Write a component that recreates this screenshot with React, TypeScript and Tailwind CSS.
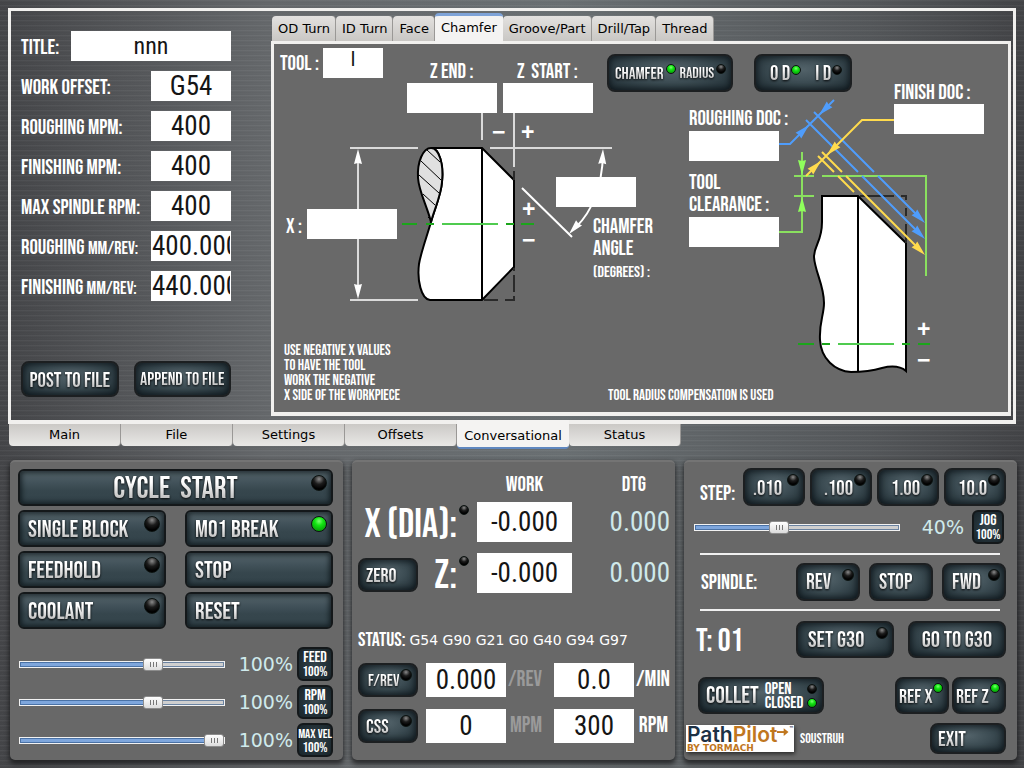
import type { CSSProperties, ReactNode } from 'react';

const BEBAS = "font-['Bebas_Neue','Roboto_Condensed','Liberation_Sans',sans-serif]";
const COND = "font-['Roboto_Condensed','Liberation_Sans',sans-serif]";
const DEJAVU = "font-['DejaVu_Sans',sans-serif]";

const METAL =
  'bg-[repeating-linear-gradient(to_bottom,rgba(255,255,255,0.04)_0px,rgba(255,255,255,0.04)_1px,rgba(0,0,0,0.06)_2px,rgba(0,0,0,0)_3px,rgba(0,0,0,0.03)_5px),linear-gradient(to_right,#454649_0%,#66696c_26%,#6b7174_55%,#55585b_85%,#434447_100%)]';

const FACE_WIDE =
  'rounded-md border-2 border-[#14181a] bg-[linear-gradient(to_bottom,#56656b_0%,#42525a_35%,#36464d_60%,#33434a_100%)] shadow-[inset_0_0_5px_2px_rgba(5,12,15,0.65)]';
const FACE =
  'rounded-lg border-2 border-[#1c1f21] bg-[radial-gradient(ellipse_at_50%_40%,#526269_0%,#3c4c53_45%,#1d2a30_100%)] shadow-[inset_0_0_6px_1px_rgba(5,12,15,0.7)]';

function Led({ on = false, size = 'size-3' }: { on?: boolean; size?: string }) {
  const tone = on
    ? 'bg-[radial-gradient(circle_at_50%_30%,#7dff70_0%,#12e512_35%,#0aa80a_75%)]'
    : 'bg-[radial-gradient(circle_at_50%_22%,#8a8a8a_0%,#1c1c1c_40%,#000_75%)]';
  return <span className={`${size} shrink-0 rounded-full border border-[#0b1210] ${tone}`} />;
}

function Etched({ children, size }: { children: ReactNode; size: string }) {
  return (
    <span
      className={`${BEBAS} ${size} whitespace-nowrap bg-linear-to-b from-white from-30% to-[#a9a9a9] bg-clip-text leading-none text-transparent drop-shadow-[0_1px_1px_rgba(0,0,0,0.9)]`}
    >
      {children}
    </span>
  );
}

type KeyProps = {
  children: ReactNode;
  size?: string;
  box: string;
  led?: 'on' | 'off';
  ledSize?: string;
  face?: string;
};

function Key({ children, size = 'text-[22px]', box, led, ledSize = 'size-3', face = FACE }: KeyProps) {
  return (
    <button type="button" className={`relative flex items-center pt-0.5 ${face} ${box}`}>
      <Etched size={size}>{children}</Etched>
      {led && (
        <span className="absolute right-1 top-1 flex">
          <Led on={led === 'on'} size={ledSize} />
        </span>
      )}
    </button>
  );
}

function Small({ top, bottom, box, text = 'text-[16px]' }: { top: string; bottom: string; box: string; text?: string }) {
  return (
    <button
      type="button"
      className={`${BEBAS} ${box} flex shrink-0 flex-col items-center justify-center rounded-md border-2 border-[#14181a] bg-[radial-gradient(circle,#33434a,#18242a)] text-white`}
    >
      <span className={`${text} whitespace-nowrap leading-[14px]`}>{top}</span>
      <span className="text-[14px] leading-[13px]">{bottom}</span>
    </button>
  );
}

function Slider({ value, max, label }: { value: number; max: number; label: string }) {
  const fill = { '--fill': `${(value / max) * 100}%` } as CSSProperties;
  return (
    <input
      type="range"
      aria-label={label}
      min={0}
      max={max}
      defaultValue={value}
      style={fill}
      className="h-3.5 w-[206px] shrink-0 appearance-none bg-transparent [&::-webkit-slider-runnable-track]:h-[7px] [&::-webkit-slider-runnable-track]:border [&::-webkit-slider-runnable-track]:border-[#f2f2f2] [&::-webkit-slider-runnable-track]:bg-[linear-gradient(to_right,#7ea6dc_var(--fill),#cfcfcf_var(--fill))] [&::-webkit-slider-runnable-track]:shadow-[inset_0_0_0_1px_rgba(40,80,130,0.6)] [&::-webkit-slider-thumb]:-mt-1 [&::-webkit-slider-thumb]:h-[13px] [&::-webkit-slider-thumb]:w-5 [&::-webkit-slider-thumb]:appearance-none [&::-webkit-slider-thumb]:rounded-[3px] [&::-webkit-slider-thumb]:border [&::-webkit-slider-thumb]:border-[#8c8c8c] [&::-webkit-slider-thumb]:bg-[linear-gradient(#777,#777),linear-gradient(#777,#777),linear-gradient(#777,#777),linear-gradient(to_bottom,#fff,#dcdcdc)] [&::-webkit-slider-thumb]:bg-[length:1px_5px,1px_5px,1px_5px,100%_100%] [&::-webkit-slider-thumb]:bg-[position:6px_3px,9px_3px,12px_3px,0_0] [&::-webkit-slider-thumb]:bg-no-repeat"
    />
  );
}

function Field({ id, value = '', box, text = 'text-[27px]' }: { id: string; value?: string; box: string; text?: string }) {
  return (
    <input
      id={id}
      type="text"
      defaultValue={value}
      className={`${COND} ${box} ${text} bg-white px-px text-center leading-none text-[#151515] outline-none`}
    />
  );
}

const setup = [
  { id: 'offset', label: 'Work Offset:', unit: '', value: 'G54' },
  { id: 'rough-mpm', label: 'Roughing MPM:', unit: '', value: '400' },
  { id: 'finish-mpm', label: 'Finishing MPM:', unit: '', value: '400' },
  { id: 'max-rpm', label: 'Max Spindle RPM:', unit: '', value: '400' },
  { id: 'rough-rev', label: 'Roughing ', unit: 'mm/rev:', value: '400.000' },
  { id: 'finish-rev', label: 'Finishing ', unit: 'mm/rev:', value: '440.000' },
];

function SetupForm() {
  return (
    <form className="w-[260px] shrink-0 pl-2.5 pr-10 pt-5">
      <div className="flex h-[30px] items-center">
        <label htmlFor="title" className={`${BEBAS} w-[50px] pt-0.5 text-[21px] uppercase leading-none text-white`}>
          Title:
        </label>
        <Field id="title" value="nnn" text="text-[24px]" box="h-[30px] w-[160px]" />
      </div>
      {setup.map((row) => (
        <div key={row.id} className="mt-2.5 flex h-[30px] items-center">
          <label htmlFor={row.id} className={`${BEBAS} w-[130px] whitespace-nowrap pt-0.5 text-[21px] uppercase leading-none text-white`}>
            {row.label}
            {row.unit && <span className="text-[18px]">{row.unit}</span>}
          </label>
          <Field id={row.id} value={row.value} box="h-[30px] w-20" />
        </div>
      ))}
      <div className="mt-[60px] flex gap-[15px]">
        <Key box="h-9 w-[98px] justify-center" size="text-[21px]">
          POST TO FILE
        </Key>
        <Key box="h-9 w-[98px] justify-center" size="text-[18px]">
          APPEND TO FILE
        </Key>
      </div>
    </form>
  );
}

const cycles = ['OD Turn', 'ID Turn', 'Face', 'Chamfer', 'Groove/Part', 'Drill/Tap', 'Thread'];

function CycleTabs() {
  return (
    <div role="tablist" className={`${DEJAVU} flex h-7 items-end pl-px text-[13px] text-black`}>
      {cycles.map((name) =>
        name === 'Chamfer' ? (
          <button
            key={name}
            type="button"
            role="tab"
            aria-selected="true"
            className="relative z-10 -mb-[3px] h-[31px] rounded-t-sm border-t-[3px] border-[#7ea3d8] bg-[#f4f3f2] px-1.5 pb-1"
          >
            {name}
          </button>
        ) : (
          <button
            key={name}
            type="button"
            role="tab"
            aria-selected="false"
            className="h-[25px] rounded-t-sm border-r border-[#9a9896] bg-linear-to-b from-[#e3e1df] to-[#c9c7c4] pl-1.5 pr-[5px]"
          >
            {name}
          </button>
        ),
      )}
    </div>
  );
}

function Arrow({ x, y, angle, fill }: { x: number; y: number; angle: number; fill: string }) {
  return <path d="M0 0L-15 -4L-14 0L-15 4Z" fill={fill} transform={`translate(${x} ${y}) rotate(${angle})`} />;
}

function ChamferDrawing() {
  const green = '#8ae05f';
  const blue = '#4f9dfc';
  const yellow = '#ffdb4d';
  return (
    <svg className="absolute left-0 top-0" width="733" height="368" viewBox="274 44 733 368" fill="none" aria-hidden="true">
      <g stroke="#dadada" strokeWidth="2">
        <path d="M482 113V140M514 113V167M350 148H418M490 148H612M350 300H418M358 155V294" />
      </g>
      <Arrow x={358} y={149} angle={-90} fill="#fff" />
      <Arrow x={358} y={299} angle={90} fill="#fff" />
      <path
        d="M431 148H482L514 180V267L482 300H430C421 299 417 280 419 264C421 252 427 236 431 222C434 210 441 196 442 182C444 164 439 148 431 148Z"
        fill="#fff"
        stroke="#000"
        strokeWidth="2"
      />
      <path
        d="M431 148C423 148 417 162 418 178C419 192 427 206 431 222C434 210 441 196 442 182C444 164 439 148 431 148Z"
        fill="#e0e0e0"
        stroke="#000"
        strokeWidth="2"
      />
      <path d="M427 150L440 162M421 161L441 180M419 175L439 193M423 194L435 205M428 217L431 220" stroke="#000" />
      <path d="M482 148V300" stroke="#000" strokeWidth="2" />
      <path d="M484 300H498M505 300H514V296M514 292V275M514 271V268M514 171V180" stroke="#2a2a2a" strokeWidth="2" />
      <path d="M402 224H417M426 224H434M506 224H514M521 224H534" stroke="#1ba51b" strokeWidth="2" />
      <path d="M442 224H498" stroke="#4fcb4f" strokeWidth="2" />
      <path d="M522 188L572 237M603 155C602 186 592 212 576 227" stroke="#fff" strokeWidth="2" />
      <Arrow x={603} y={149} angle={-87} fill="#fff" />
      <Arrow x={569} y={234} angle={132} fill="#fff" />

      <path
        d="M822 196H858L906 243V371C900 366 890 366 882 368C872 371 862 372 851 372C835 371 821 359 820 340C819 322 824 315 824 303C824 285 815 272 814 257C814 245 822 242 822 222Z"
        fill="#fff"
        stroke="#000"
        strokeWidth="2"
      />
      <path d="M858 196V372" stroke="#000" strokeWidth="2" />
      <path d="M860 196H894M901 196H906V200M906 208V216M906 224V243" stroke="#2a2a2a" strokeWidth="2" />
      <path d="M798 344H814M822 344H830M902 344H910M918 344H930" stroke="#1ba51b" strokeWidth="2" />
      <path d="M838 344H894" stroke="#4fcb4f" strokeWidth="2" />

      <path d="M822 176H926V276M794 176H814M794 196H814M802 152V232H779" stroke={green} strokeWidth="2" />
      <Arrow x={802} y={175} angle={90} fill="#8fff5c" />
      <Arrow x={802} y={197} angle={-90} fill="#8fff5c" />

      <path
        d="M814 112L874 172M878 176L920 218M806 120L858 172M862 176L920 234M834 100L808 126L790 144H779"
        stroke={blue}
        strokeWidth="2"
      />
      <Arrow x={819} y={115} angle={135} fill={blue} />
      <Arrow x={809} y={125} angle={-45} fill={blue} />
      <Arrow x={925} y={223} angle={45} fill={blue} />
      <Arrow x={925} y={239} angle={45} fill={blue} />

      <path
        d="M822 152L842 172M846 176L920 250M818 156L834 172M838 176L854 192M894 120H862L806 176"
        stroke={yellow}
        strokeWidth="2"
      />
      <Arrow x={827} y={155} angle={135} fill={yellow} />
      <Arrow x={821} y={161} angle={-45} fill={yellow} />
      <Arrow x={925} y={255} angle={45} fill={yellow} />
    </svg>
  );
}

const callouts = [
  { id: 'tool', text: 'Tool :', label: 'left-[6px] top-[9px]', box: 'left-[49px] top-[4px] w-[60px]', value: 'I' },
  { id: 'z-end', text: 'Z End :', label: 'left-[156px] top-[17px]', box: 'left-[133px] top-[39px] w-[90px]', value: '' },
  { id: 'z-start', text: 'Z\u00a0 Start :', label: 'left-[243px] top-[17px]', box: 'left-[229px] top-[39px] w-[90px]', value: '' },
  { id: 'x', text: 'X :', label: 'left-[12px] top-[172px]', box: 'left-[33px] top-[165px] w-[90px]', value: '' },
  { id: 'rough', text: 'Roughing Doc :', label: 'left-[415px] top-[64px]', box: 'left-[415px] top-[87px] w-[90px]', value: '' },
  { id: 'finish', text: 'Finish Doc :', label: 'left-[620px] top-[38px]', box: 'left-[620px] top-[60px] w-[90px]', value: '' },
];

const signs = [
  { text: '−', at: 'left-[218px] top-[78px]' },
  { text: '+', at: 'left-[247px] top-[78px]' },
  { text: '+', at: 'left-[248px] top-[155px]' },
  { text: '−', at: 'left-[248px] top-[186px]' },
  { text: '+', at: 'left-[643px] top-[275px]' },
  { text: '−', at: 'left-[643px] top-[306px]' },
];

function ChamferCanvas() {
  const label = `${BEBAS} absolute whitespace-nowrap text-[21px] uppercase leading-[22px] text-white`;
  return (
    <div className="relative h-[375px] border-x-[3px] border-b-4 border-t-[3px] border-[#f1f0ee] bg-[#696969]">
      <ChamferDrawing />
      {callouts.map((c) => (
        <div key={c.id}>
          <label htmlFor={c.id} className={`${label} ${c.label}`}>
            {c.text}
          </label>
          <Field id={c.id} value={c.value} text="text-[20px] pb-2" box={`absolute h-[30px] ${c.box}`} />
        </div>
      ))}
      <label htmlFor="clearance" className={`${label} left-[415px] top-[128px]`}>
        Tool
        <br />
        Clearance :
      </label>
      <Field id="clearance" box="absolute left-[415px] top-[173px] h-[30px] w-[90px]" />
      <label htmlFor="angle" className={`${label} left-[319px] top-[172px]`}>
        Chamfer
        <br />
        Angle
        <br />
        <span className="text-[16px]">(Degrees) :</span>
      </label>
      <Field id="angle" box="absolute left-[282px] top-[133px] h-[30px] w-20" />
      {signs.map((s) => (
        <span
          key={s.at}
          className={`absolute font-['Liberation_Sans',sans-serif] text-[23px] font-bold leading-5 text-white ${s.at}`}
        >
          {s.text}
        </span>
      ))}
      <button type="button" className={`${FACE} absolute left-[333px] top-[10px] flex h-[38px] w-[126px] items-center pl-1.5 pt-0.5`}>
        <Etched size="text-[17px]">CHAMFER</Etched>
        <span className="-mt-2.5 ml-[3px] mr-[3px] flex">
          <Led on size="size-2.5" />
        </span>
        <Etched size="text-[16px]">RADIUS</Etched>
        <span className="-mt-2.5 ml-0.5 flex">
          <Led size="size-2.5" />
        </span>
      </button>
      <button type="button" className={`${FACE} absolute left-[480px] top-[10px] flex h-[38px] w-[98px] items-center pl-3.5`}>
        <Etched size="text-[21px]">O D</Etched>
        <span className="-mt-1.5 ml-px mr-3.5 flex">
          <Led on size="size-2.5" />
        </span>
        <Etched size="text-[21px]">I D</Etched>
        <span className="-mt-1.5 ml-px flex">
          <Led size="size-2.5" />
        </span>
      </button>
      <p className={`${BEBAS} absolute left-2.5 top-[299px] text-[15px] uppercase leading-[15px] text-white`}>
        Use negative X values
        <br />
        to have the tool
        <br />
        work the negative
        <br />X side of the workpiece
      </p>
      <p className={`${BEBAS} absolute left-[334px] top-[344px] whitespace-nowrap text-[15px] uppercase leading-[15px] text-white`}>
        Tool radius compensation is used
      </p>
    </div>
  );
}

const pages = ['Main', 'File', 'Settings', 'Offsets', 'Conversational', 'Status'];

function PageTabs() {
  return (
    <div role="tablist" className={`${DEJAVU} flex items-start pl-px text-[13px] text-black`}>
      {pages.map((name) =>
        name === 'Conversational' ? (
          <button
            key={name}
            type="button"
            role="tab"
            aria-selected="true"
            className="-mt-1 h-[29px] w-28 rounded-b-sm border-b-2 border-[#5f87bf] bg-[#f4f3f2] pt-1"
          >
            {name}
          </button>
        ) : (
          <button
            key={name}
            type="button"
            role="tab"
            aria-selected="false"
            className="h-[22px] w-28 rounded-b-sm border-r border-[#9a9896] bg-linear-to-b from-[#cbc9c6] to-[#e9e8e6]"
          >
            {name}
          </button>
        ),
      )}
    </div>
  );
}

const PANEL =
  'min-w-0 rounded-[5px] border-t-2 border-[#747474] bg-[#686868] shadow-[0_3px_5px_1px_rgba(20,20,22,0.75)]';

const overrides = [
  { name: 'FEED', value: 100, max: 150, text: 'text-[16px]' },
  { name: 'RPM', value: 100, max: 150, text: 'text-[16px]' },
  { name: 'MAX VEL', value: 100, max: 100, text: 'text-[13px]' },
];

function CyclePanel() {
  const wide = 'h-[37px] pl-2';
  return (
    <section className={`${PANEL} h-[300px] pl-2 pr-2.5 pt-[7px]`}>
      <Key box="h-[37px] w-full justify-center" size="text-[31px]" led="off" ledSize="size-4" face={FACE_WIDE}>
        CYCLE&nbsp; START
      </Key>
      <div className="mt-1 grid grid-cols-2 gap-x-[19px] gap-y-1">
        <Key box={wide} size="text-[24px]" led="off" ledSize="size-4" face={FACE_WIDE}>SINGLE BLOCK</Key>
        <Key box={wide} size="text-[24px]" led="on" ledSize="size-4" face={FACE_WIDE}>M01 BREAK</Key>
        <Key box={wide} size="text-[24px]" led="off" ledSize="size-4" face={FACE_WIDE}>FEEDHOLD</Key>
        <Key box={wide} size="text-[24px]" face={FACE_WIDE}>STOP</Key>
        <Key box={wide} size="text-[24px]" led="off" ledSize="size-4" face={FACE_WIDE}>COOLANT</Key>
        <Key box={wide} size="text-[24px]" face={FACE_WIDE}>RESET</Key>
      </div>
      <div className="mt-[18px] flex flex-col gap-1 pl-px">
        {overrides.map((o) => (
          <div key={o.name} className="flex items-center justify-between">
            <Slider value={o.value} max={o.max} label={`${o.name} override`} />
            <div className="flex items-center gap-1">
              <span className={`${DEJAVU} text-[19px] leading-none text-[#cfeaec]`}>100%</span>
              <Small top={o.name} bottom="100%" box="h-[34px] w-9" text={o.text} />
            </div>
          </div>
        ))}
      </div>
    </section>
  );
}

function Unit({ children, dim = false }: { children: ReactNode; dim?: boolean }) {
  return <span className={`${BEBAS} text-[22px] leading-none ${dim ? 'text-[#9a9a9a]' : 'text-white'}`}>{children}</span>;
}

function AxisPanel() {
  const head = `${BEBAS} h-[17px] text-[21px] leading-[22px] text-white`;
  const axis = `${BEBAS} h-10 whitespace-nowrap text-[40px] leading-[46px] text-white`;
  const dtg = `${COND} text-right text-[27px] leading-10 text-[#cfe8ea]`;
  return (
    <section className={`${PANEL} h-[300px] pl-1.5 pr-[5px] pt-3`}>
      <div className="grid grid-cols-[119px_95px_1fr] gap-y-[11px]">
        <span />
        <span className={`${head} text-center`}>WORK</span>
        <span className={`${head} pr-6 text-right`}>DTG</span>
        <div className="flex items-start justify-end gap-0.5 pr-2">
          <label htmlFor="work-x" className={axis}>
            X (DIA):
          </label>
          <span className="flex pt-[3px]">
            <Led size="size-2.5" />
          </span>
        </div>
        <Field id="work-x" value="-0.000" box="h-10 w-[95px]" />
        <span className={dtg}>0.000</span>
        <div className="flex items-start gap-0.5 pr-2">
          <Key box="mt-[5px] h-[34px] w-[60px] pl-1.5" size="text-[20px]">
            ZERO
          </Key>
          <label htmlFor="work-z" className={`${axis} ml-auto`}>
            Z:
          </label>
          <span className="flex pt-[3px]">
            <Led size="size-2.5" />
          </span>
        </div>
        <Field id="work-z" value="-0.000" box="h-10 w-[95px]" />
        <span className={dtg}>0.000</span>
      </div>
      <p className="mt-9 flex items-center gap-1 whitespace-nowrap text-white">
        <span className={`${BEBAS} text-[20px] leading-[22px]`}>STATUS:</span>
        <span className={`${DEJAVU} text-[14px] leading-[22px]`}>G54 G90 G21 G0 G40 G94 G97</span>
      </p>
      <div className="mt-3 grid grid-cols-[68px_80px_48px_80px_1fr] items-center gap-y-3">
        <Key box="h-[34px] w-[60px] pl-2" size="text-[17px]" led="off">F/REV</Key>
        <Field id="feed-rev" value="0.000" box="h-[34px] w-20" />
        <span className="pl-0.5"><Unit dim>/REV</Unit></span>
        <Field id="feed-min" value="0.0" box="h-[34px] w-20" />
        <span className="text-right"><Unit>/MIN</Unit></span>
        <Key box="h-[34px] w-[60px] pl-1.5" size="text-[20px]" led="off">CSS</Key>
        <Field id="css" value="0" box="h-[34px] w-20" />
        <span className="pl-1"><Unit dim>MPM</Unit></span>
        <Field id="rpm" value="300" box="h-[34px] w-20" />
        <span className="pr-0.5 text-right"><Unit>RPM</Unit></span>
      </div>
    </section>
  );
}

function Logo() {
  return (
    <div className="flex h-[27px] w-[108px] flex-col bg-white pl-px shadow-[1px_2px_4px_rgba(0,0,0,0.6)]">
      <div className="flex items-start font-['Inter',sans-serif] text-[21px] font-semibold leading-[19px]">
        <span className="text-[#1d3145]">Path</span>
        <span className="text-[#c0771f]">Pilot</span>
        <svg width="12" height="16" viewBox="0 0 12 16" fill="none" aria-hidden="true">
          <path d="M0 7H8" stroke="#c0771f" strokeWidth="2" />
          <path d="M7 3L12 7L7 11Z" fill="#c0771f" />
        </svg>
        <span className={`${DEJAVU} text-[5px] leading-[6px] text-[#1d3145]`}>™</span>
      </div>
      <span className={`${DEJAVU} text-[9px] font-bold leading-[8px] text-[#c0771f]`}>BY TORMACH</span>
    </div>
  );
}

function JogPanel() {
  const head = `${BEBAS} text-[21px] leading-[22px] text-white`;
  return (
    <section className={`${PANEL} h-[300px] pl-2.5 pr-[11px] pt-1.5`}>
      <div className="flex items-center justify-between pl-1.5">
        <span className={`${head} pt-3.5`}>STEP:</span>
        <div className="flex gap-[5px]">
          <Key box="h-[38px] w-[62px] pl-2" size="text-[21px]" led="off">.010</Key>
          <Key box="h-[38px] w-[62px] pl-3" size="text-[21px]" led="off">.100</Key>
          <Key box="h-[38px] w-[62px] pl-3" size="text-[21px]" led="off">1.00</Key>
          <Key box="h-[38px] w-[62px] pl-3" size="text-[21px]" led="off">10.0</Key>
        </div>
      </div>
      <div className="mt-1 flex items-center justify-between pr-0.5">
        <Slider value={40} max={100} label="Jog speed" />
        <div className="flex items-center gap-2">
          <span className={`${DEJAVU} text-[19px] leading-none text-[#cfeaec]`}>40%</span>
          <Small top="JOG" bottom="100%" box="h-[34px] w-8" />
        </div>
      </div>
      <hr className="ml-1.5 mr-1.5 mt-[9px] border-t-2 border-[#f0f0f0]" />
      <div className="mt-2 flex items-center justify-between pl-[7px]">
        <span className={`${head} pt-0.5`}>SPINDLE:</span>
        <div className="flex gap-[9px]">
          <Key box="h-[38px] w-16 pl-2" size="text-[22px]" led="off">REV</Key>
          <Key box="h-[38px] w-16 pl-2" size="text-[22px]">STOP</Key>
          <Key box="h-[38px] w-16 pl-2" size="text-[22px]" led="off">FWD</Key>
        </div>
      </div>
      <hr className="ml-1.5 mr-1.5 mt-2 border-t-2 border-[#f0f0f0]" />
      <div className="mt-[9px] flex items-center justify-between pl-0.5">
        <span className={`${BEBAS} pt-1.5 text-[32px] leading-8 text-white`}>T: 01</span>
        <div className="flex gap-3.5">
          <Key box="h-[37px] w-[98px] pl-2.5" size="text-[23px]" led="off">SET G30</Key>
          <Key box="h-[37px] w-[98px] justify-center" size="text-[23px]">GO TO G30</Key>
        </div>
      </div>
      <div className="mt-[19px] flex items-center justify-between pl-1">
        <button type="button" className={`${FACE} flex h-[37px] w-[126px] items-center pl-1.5`}>
          <Etched size="text-[24px]">COLLET</Etched>
          <span className={`${BEBAS} ml-1.5 flex flex-col text-left text-[17px] leading-[14px] text-white`}>
            <span>OPEN</span>
            <span>CLOSED</span>
          </span>
          <span className="ml-1 flex flex-col gap-1">
            <Led size="size-2.5" />
            <Led on size="size-2.5" />
          </span>
        </button>
        <div className="flex gap-[3px]">
          <Key box="h-[37px] w-[54px] pl-0.5" size="text-[20px]" led="on" ledSize="size-2.5">REF X</Key>
          <Key box="h-[37px] w-[54px] pl-0.5" size="text-[20px]" led="on" ledSize="size-2.5">REF Z</Key>
        </div>
      </div>
      <div className="-ml-2 mt-[9px] flex items-center">
        <Logo />
        <span className={`${BEBAS} ml-1.5 text-[14px] leading-none text-white`}>SOUSTRUH</span>
        <Key box="ml-auto h-[31px] w-[76px] pl-1.5" size="text-[21px]">EXIT</Key>
      </div>
    </section>
  );
}

export default function App() {
  return (
    <main className={`${METAL} min-h-screen overflow-hidden px-2 pb-2 pt-2`}>
      <section className="flex border-b-4 border-l-[3px] border-r-[3px] border-t-[3px] border-[#f1f0ee]">
        <SetupForm />
        <div className="mr-0.5 min-w-0 flex-1 pb-1 pt-0.5">
          <CycleTabs />
          <ChamferCanvas />
        </div>
      </section>
      <PageTabs />
      <div className="-mr-px ml-0.5 mt-[11px] grid grid-cols-[333fr_323fr_333fr] gap-[9px]">
        <CyclePanel />
        <AxisPanel />
        <JogPanel />
      </div>
    </main>
  );
}
